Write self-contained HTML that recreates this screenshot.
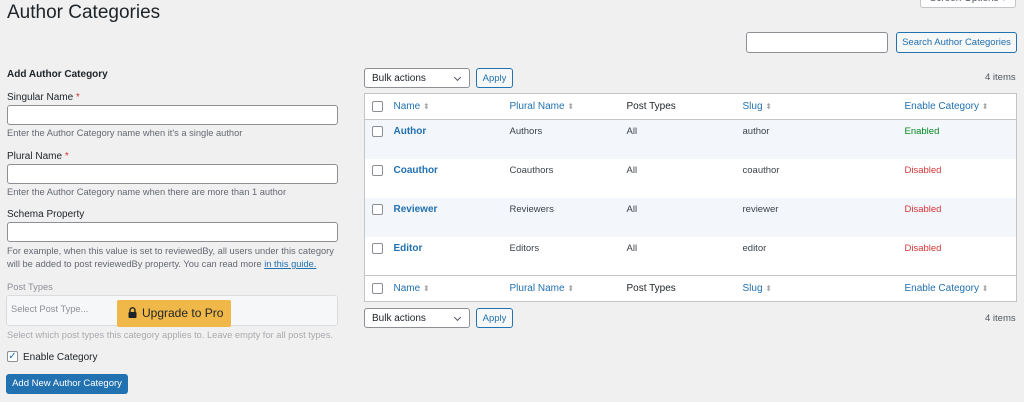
<!DOCTYPE html>
<html><head><style>
*{box-sizing:border-box;margin:0;padding:0}
body{width:1024px;height:402px;background:#f0f0f1;font-family:"Liberation Sans",sans-serif;color:#1d2327;position:relative;overflow:hidden;font-size:10.5px}
.a{position:absolute}
.inp{position:absolute;background:#fff;border:1px solid #8c8f94;border-radius:3px}
.lbl{font-size:10px;color:#1d2327}
.hint{font-size:9.3px;color:#646970;white-space:nowrap}
.btn2{position:absolute;border:1px solid #2271b1;color:#2271b1;background:#f6f7f7;border-radius:3px;font-size:9.5px;display:flex;align-items:center;justify-content:center}
.sel{position:absolute;background:#fff;border:1px solid #8c8f94;border-radius:3px;font-size:10px;padding:0 7px;display:flex;align-items:center}
.sel:after{content:"";position:absolute;right:9px;top:6px;width:4px;height:4px;border-right:1.3px solid #50575e;border-bottom:1.3px solid #50575e;transform:rotate(45deg)}
table{position:absolute;left:364px;top:93px;width:653px;border:1px solid #c3c4c7;border-collapse:collapse;background:#fff;font-size:9.5px;color:#3c434a}
td,th{text-align:left;font-weight:normal;vertical-align:top}
th{height:26px;vertical-align:middle;color:#2271b1;font-size:10px}
tr.r td{height:39px;padding-top:6px}
tr.alt{background:#f3f6fa}
thead tr{border-bottom:1px solid #c3c4c7}
tfoot tr{border-top:1px solid #c3c4c7}
.cb{display:inline-block;width:11px;height:11px;border:1px solid #8c8f94;border-radius:2px;background:#fff;vertical-align:middle}
.s{color:#a7aaad;font-size:8px}
.nm{color:#2271b1;font-weight:bold;font-size:10px}
.dis{color:#d63638}.en{color:#008a20}
</style></head><body>
<div class="a" style="left:7px;top:2px;font-size:19px;color:#1d2327">Author Categories</div>
<div class="a" style="left:920px;top:-8px;width:96px;height:16px;background:#fff;border:1px solid #c3c4c7;border-radius:3px;font-size:10px;color:#50575e;text-align:center;line-height:12px">Screen Options ▾</div>
<div class="inp" style="left:746px;top:32px;width:142px;height:21px"></div>
<div class="btn2" style="left:896px;top:32px;width:121px;height:21px">Search Author Categories</div>

<div class="a" style="left:7px;top:69px;font-weight:bold;font-size:10px">Add Author Category</div>
<div class="a lbl" style="left:7px;top:92px">Singular Name <span style="color:#d63638">*</span></div>
<div class="inp" style="left:7px;top:105px;width:331px;height:20px"></div>
<div class="a hint" style="left:7px;top:128px">Enter the Author Category name when it's a single author</div>
<div class="a lbl" style="left:7px;top:151px">Plural Name <span style="color:#d63638">*</span></div>
<div class="inp" style="left:7px;top:164px;width:331px;height:20px"></div>
<div class="a hint" style="left:7px;top:187px">Enter the Author Category name when there are more than 1 author</div>
<div class="a lbl" style="left:7px;top:209px">Schema Property</div>
<div class="inp" style="left:7px;top:222px;width:331px;height:20px"></div>
<div class="a hint" style="left:7px;top:245px;line-height:13px">For example, when this value is set to reviewedBy, all users under this category<br>will be added to post reviewedBy property. You can read more <span style="color:#2271b1;text-decoration:underline">in this guide.</span></div>
<div class="a hint" style="left:7px;top:282px;color:#8c8f94">Post Types</div>
<div class="a" style="left:6px;top:295px;width:332px;height:31px;background:#f6f7f9;border:1px solid #dcdcde;border-radius:3px"></div>
<div class="a hint" style="left:11px;top:304px;color:#8c8f94">Select Post Type...</div>
<div class="a" style="left:117px;top:300px;width:114px;height:27px;background:#f0b849;border-radius:2px;font-size:12px;color:#1d2327;line-height:27px;padding-left:11px">
<svg width="9" height="11" viewBox="0 0 9 11" style="vertical-align:-1px;margin-right:5px"><path d="M2 5V3.3a2.5 2.5 0 0 1 5 0V5" fill="none" stroke="#1d2327" stroke-width="1.4"/><rect x="0.5" y="5" width="8" height="6" rx="1" fill="#1d2327"/></svg>Upgrade to Pro</div>
<div class="a hint" style="left:7px;top:330px;color:#a7aaad">Select which post types this category applies to. Leave empty for all post types.</div>
<div class="a" style="left:7px;top:351px;width:11px;height:11px;border:1px solid #8c8f94;border-radius:2px;background:#fff;color:#2271b1;font-size:10px;line-height:9px;text-align:center">✓</div>
<div class="a lbl" style="left:23px;top:352px">Enable Category</div>
<div class="a" style="left:6px;top:374px;width:122px;height:20px;background:#2271b1;border-radius:3px;color:#fff;font-size:9.5px;line-height:20px;text-align:center">Add New Author Category</div>

<div class="sel" style="left:364px;top:68px;width:106px;height:20px">Bulk actions</div>
<div class="btn2" style="left:476px;top:68px;width:37px;height:20px">Apply</div>
<div class="a" style="left:985px;top:72px;font-size:9.5px;color:#50575e">4 items</div>

<table>
<thead><tr><th style="width:29px;padding-left:7px"><span class="cb"></span></th><th style="width:116px">Name <span class="s">⬍</span></th><th style="width:117px">Plural Name <span class="s">⬍</span></th><th style="width:116px;color:#1d2327">Post Types</th><th style="width:162px">Slug <span class="s">⬍</span></th><th>Enable Category <span class="s">⬍</span></th></tr></thead>
<tbody>
<tr class="r alt"><td style="padding-left:7px"><span class="cb"></span></td><td class="nm">Author</td><td>Authors</td><td>All</td><td>author</td><td class="en">Enabled</td></tr>
<tr class="r"><td style="padding-left:7px"><span class="cb"></span></td><td class="nm">Coauthor</td><td>Coauthors</td><td>All</td><td>coauthor</td><td class="dis">Disabled</td></tr>
<tr class="r alt"><td style="padding-left:7px"><span class="cb"></span></td><td class="nm">Reviewer</td><td>Reviewers</td><td>All</td><td>reviewer</td><td class="dis">Disabled</td></tr>
<tr class="r"><td style="padding-left:7px"><span class="cb"></span></td><td class="nm">Editor</td><td>Editors</td><td>All</td><td>editor</td><td class="dis">Disabled</td></tr>
</tbody>
<tfoot><tr><th style="padding-left:7px"><span class="cb"></span></th><th>Name <span class="s">⬍</span></th><th>Plural Name <span class="s">⬍</span></th><th style="color:#1d2327">Post Types</th><th>Slug <span class="s">⬍</span></th><th>Enable Category <span class="s">⬍</span></th></tr></tfoot>
</table>

<div class="sel" style="left:364px;top:308px;width:106px;height:20px">Bulk actions</div>
<div class="btn2" style="left:476px;top:308px;width:37px;height:20px">Apply</div>
<div class="a" style="left:985px;top:313px;font-size:9.5px;color:#50575e">4 items</div>
</body></html>
